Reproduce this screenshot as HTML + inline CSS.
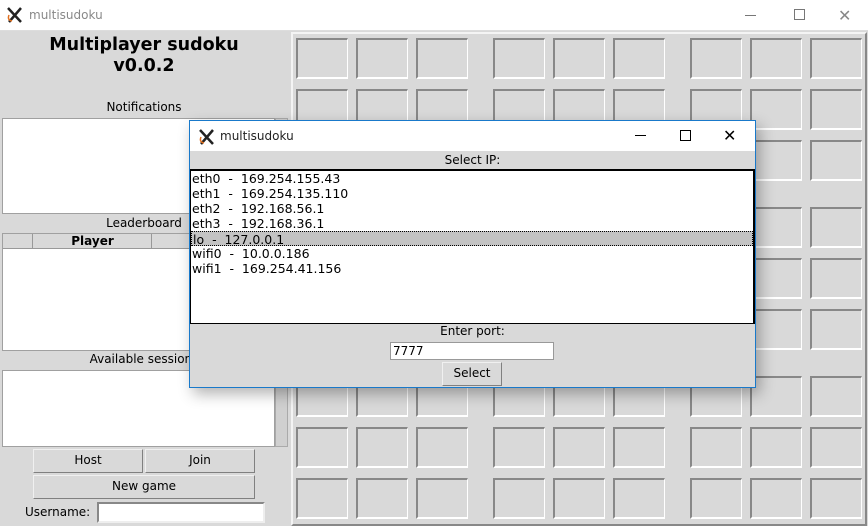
<!DOCTYPE html>
<html><head><meta charset="utf-8"><style>
*{box-sizing:border-box;margin:0;padding:0}
body{width:868px;height:526px;background:#d9d9d9;font-family:"DejaVu Sans","Liberation Sans",sans-serif;font-size:12px;color:#000;position:relative;overflow:hidden}
.abs{position:absolute}
.tb{left:0;top:0;width:868px;height:31px;background:#fff;border-bottom:1px solid #ddd}
.ttl{font-size:12px;color:#888}
.c{text-align:center}
.white{background:#fff;border:1px solid #a0a0a0}
.btn{background:#d9d9d9;border:1px solid;border-color:#f0f0f0 #808080 #808080 #f0f0f0;text-align:center;line-height:21px;font-size:12px}
.grid{left:296px;top:38px;display:grid;grid-template-columns:172px 172px 172px;grid-template-rows:143px 143px 143px;column-gap:25px;row-gap:26px}
.blk{display:grid;grid-template-columns:52px 52px 52px;grid-template-rows:41px 41px 41px;column-gap:8px;row-gap:10px}
.blk div{border:1px solid;border-color:#888 #fff #fff #888;border-width:2px 1px 2px 2px}
.dlg{left:189px;top:120px;width:567px;height:268px;background:#d9d9d9;border:1px solid #1979ca;box-shadow:4px 6px 14px rgba(0,0,0,.3)}
.lb div{height:15px;line-height:15px;padding-left:1px;font-size:12.5px;white-space:pre}
</style></head><body>
<div class="abs tb"></div>
<svg class="abs" style="left:6px;top:6px" width="18" height="18" viewBox="0 0 18 18"><path d="M2 2 L15 16 M15 2 L3 16" stroke="#222" stroke-width="2.5"/><path d="M3 9 Q1 14 6 15" stroke="#e07020" fill="none" stroke-width="1.5"/></svg>
<div class="abs ttl" style="left:29px;top:8px">multisudoku</div>
<div class="abs" style="left:745px;top:15px;width:11px;height:1px;background:#777"></div>
<div class="abs" style="left:794px;top:9px;width:11px;height:11px;border:1px solid #777"></div>
<div class="abs" style="left:838px;top:6px;font-size:16px;color:#888">✕</div>

<div class="abs c" style="left:0;top:35px;width:288px;font-weight:bold;font-size:17.5px;line-height:21px">Multiplayer sudoku<br>v0.0.2</div>
<div class="abs c" style="left:0;top:100px;width:288px">Notifications</div>
<div class="abs white" style="left:2px;top:118px;width:273px;height:96px"></div>
<div class="abs" style="left:275px;top:118px;width:13px;height:96px;background:#d0d0d0;border:1px solid #aaa"></div>
<div class="abs c" style="left:0;top:216px;width:288px">Leaderboard</div>
<div class="abs white" style="left:2px;top:233px;width:286px;height:118px"></div>
<div class="abs" style="left:3px;top:234px;width:285px;height:15px;background:#d9d9d9;border-bottom:1px solid #999"></div>
<div class="abs" style="left:3px;top:234px;width:30px;height:15px;border-right:1px solid #999"></div>
<div class="abs c" style="left:34px;top:234px;width:118px;height:15px;border-right:1px solid #999;font-weight:bold;line-height:15px">Player</div>
<div class="abs c" style="left:0;top:352px;width:288px">Available sessions</div>
<div class="abs white" style="left:2px;top:370px;width:273px;height:77px"></div>
<div class="abs" style="left:275px;top:370px;width:13px;height:77px;background:#d0d0d0;border:1px solid #aaa"></div>
<div class="abs btn" style="left:33px;top:449px;width:110px;height:24px">Host</div>
<div class="abs btn" style="left:145px;top:449px;width:110px;height:24px">Join</div>
<div class="abs btn" style="left:33px;top:475px;width:222px;height:24px">New game</div>
<div class="abs" style="left:25px;top:505px">Username:</div>
<div class="abs" style="left:97px;top:502px;width:168px;height:21px;background:#fff;border:2px solid;border-color:#888 #eee #eee #888"></div>

<div class="abs" style="left:291px;top:32px;width:576px;height:494px;border:2px solid;border-color:#f4f4f4 #888 #888 #f4f4f4"></div>
<div class="abs grid">
<div class="blk"><div></div><div></div><div></div><div></div><div></div><div></div><div></div><div></div><div></div></div>
<div class="blk"><div></div><div></div><div></div><div></div><div></div><div></div><div></div><div></div><div></div></div>
<div class="blk"><div></div><div></div><div></div><div></div><div></div><div></div><div></div><div></div><div></div></div>
<div class="blk"><div></div><div></div><div></div><div></div><div></div><div></div><div></div><div></div><div></div></div>
<div class="blk"><div></div><div></div><div></div><div></div><div></div><div></div><div></div><div></div><div></div></div>
<div class="blk"><div></div><div></div><div></div><div></div><div></div><div></div><div></div><div></div><div></div></div>
<div class="blk"><div></div><div></div><div></div><div></div><div></div><div></div><div></div><div></div><div></div></div>
<div class="blk"><div></div><div></div><div></div><div></div><div></div><div></div><div></div><div></div><div></div></div>
<div class="blk"><div></div><div></div><div></div><div></div><div></div><div></div><div></div><div></div><div></div></div>
</div>

<div class="abs dlg">
 <div class="abs" style="left:0;top:0;width:565px;height:30px;background:#fff"></div>
 <svg class="abs" style="left:8px;top:7px" width="18" height="18" viewBox="0 0 18 18"><path d="M2 2 L15 16 M15 2 L3 16" stroke="#222" stroke-width="2.5"/><path d="M3 9 Q1 14 6 15" stroke="#e07020" fill="none" stroke-width="1.5"/></svg>
 <div class="abs" style="left:30px;top:8px;font-size:12px;color:#222">multisudoku</div>
 <div class="abs" style="left:445px;top:14px;width:11px;height:1px;background:#000"></div>
 <div class="abs" style="left:490px;top:9px;width:11px;height:11px;border:1px solid #000"></div>
 <div class="abs" style="left:533px;top:5px;font-size:16px">✕</div>
 <div class="abs c" style="left:0;top:32px;width:565px">Select IP:</div>
 <div class="abs lb" style="left:0;top:48px;width:565px;height:155px;background:#fff;border:1px solid #000;border-width:2px 2px 1px 1px">
  <div>eth0  -  169.254.155.43</div><div>eth1  -  169.254.135.110</div><div>eth2  -  192.168.56.1</div><div>eth3  -  192.168.36.1</div><div style="background:#c3c3c3;border:1px dotted #000">lo  -  127.0.0.1</div><div>wifi0  -  10.0.0.186</div><div>wifi1  -  169.254.41.156</div>
 </div>
 <div class="abs c" style="left:0;top:203px;width:565px">Enter port:</div>
 <div class="abs" style="left:200px;top:221px;width:164px;height:18px;background:#fff;border:1px solid #999;padding-left:2px;line-height:16px">7777</div>
 <div class="abs btn" style="left:252px;top:241px;width:60px;height:24px">Select</div>
</div>
</body></html>
